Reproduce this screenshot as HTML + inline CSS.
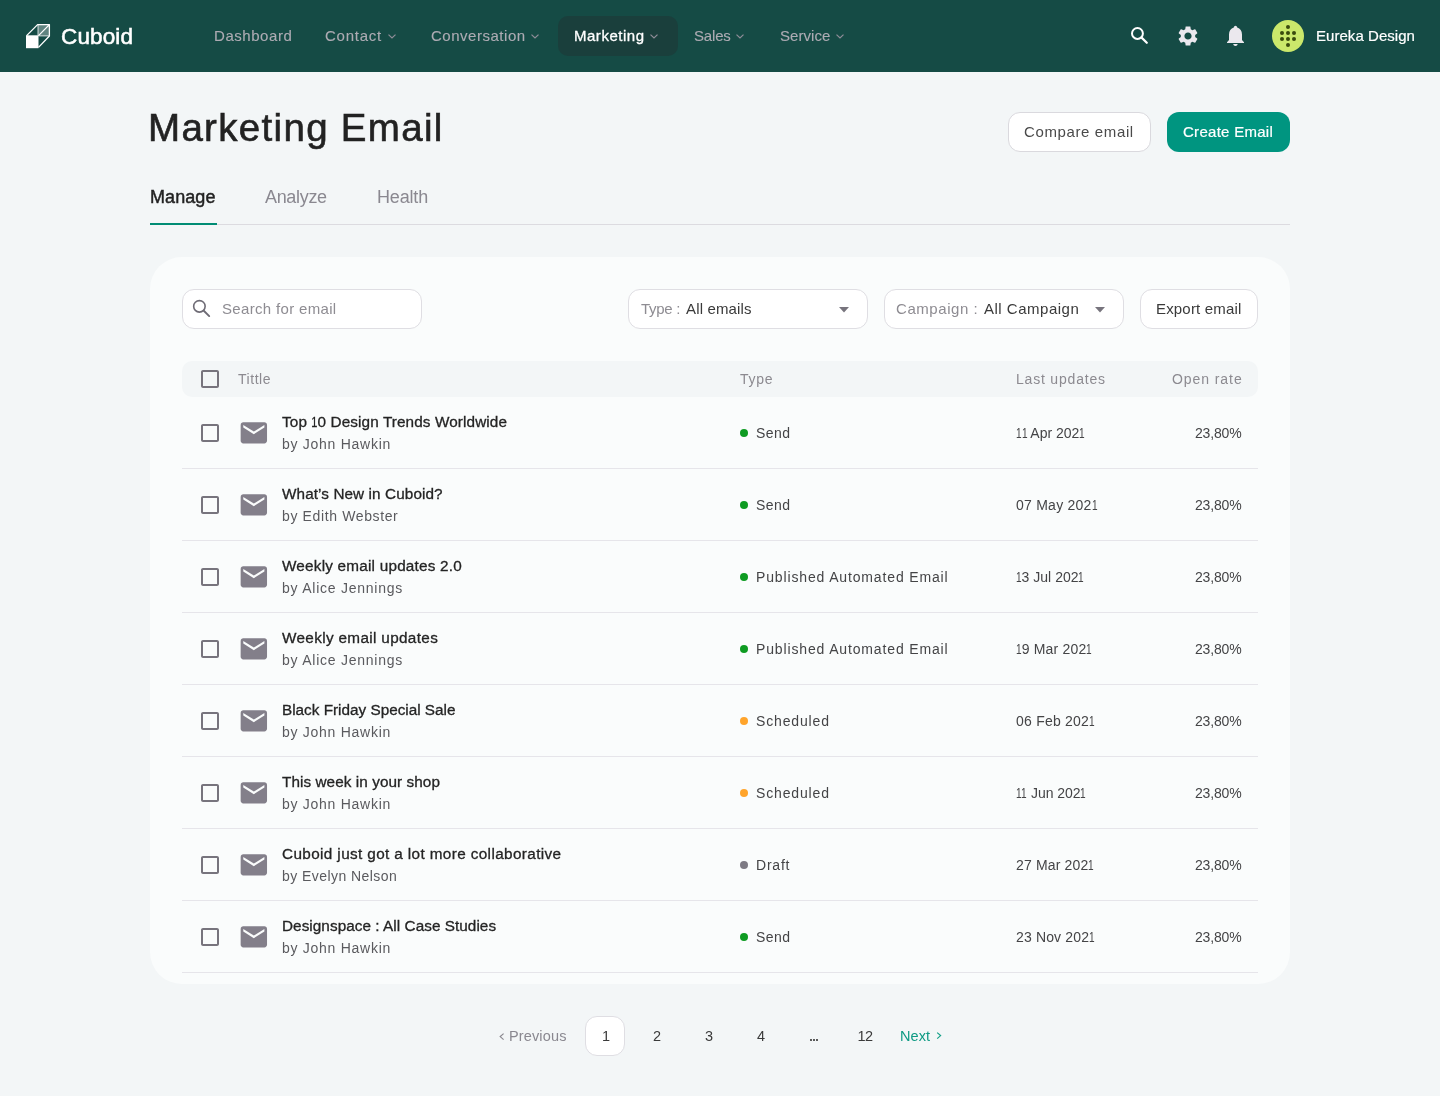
<!DOCTYPE html>
<html><head><meta charset="utf-8">
<style>
*{margin:0;padding:0;box-sizing:border-box}
html,body{width:1440px;height:1096px;overflow:hidden;background:#F3F6F7;font-family:"Liberation Sans",sans-serif}
.a{position:absolute}
.t{position:absolute;white-space:pre;font-family:"Liberation Sans",sans-serif;will-change:transform}
svg{position:absolute;overflow:visible}
.box{position:absolute;background:#fff;border:1px solid #DFDEE3;border-radius:10px}
.sep{position:absolute;left:182px;width:1076px;height:1px;background:#E6E5EA}
</style></head><body>
<!-- NAV -->
<div class="a" style="left:0;top:0;width:1440px;height:72px;background:#154B45"></div>
<svg style="left:26px;top:24px" width="24" height="24" viewBox="0 0 24 24">
  <rect x="12" y="0" width="12" height="12" fill="#fff" fill-opacity="0.32"/>
  <path d="M12 0.6V11.6M12.5 11.9H23.4" stroke="#fff" stroke-opacity="0.6" stroke-width="1.3" fill="none"/>
  <path d="M0.6 11.6L11.6 0.6H23.4V12L12.5 23.4M12.5 11.6L23.4 0.6" stroke="#fff" stroke-width="1.3" fill="none" stroke-linejoin="round"/>
  <rect x="0" y="11.3" width="12.5" height="12.9" fill="#fff"/>
</svg>
<div class="a" style="left:558px;top:16px;width:120px;height:40px;border-radius:10px;background:#1A3F3C"></div>
<svg style="left:387.5px;top:33.8px" width="8" height="5" viewBox="0 0 8 5"><path d="M0.5 0.6L4 4L7.5 0.6" stroke="#8F8D98" stroke-width="1.2" fill="none"/></svg>
<svg style="left:530.5px;top:33.8px" width="8" height="5" viewBox="0 0 8 5"><path d="M0.5 0.6L4 4L7.5 0.6" stroke="#8F8D98" stroke-width="1.2" fill="none"/></svg>
<svg style="left:650.1px;top:33.8px" width="8" height="5" viewBox="0 0 8 5"><path d="M0.5 0.6L4 4L7.5 0.6" stroke="#8F8D98" stroke-width="1.2" fill="none"/></svg>
<svg style="left:736px;top:33.8px" width="8" height="5" viewBox="0 0 8 5"><path d="M0.5 0.6L4 4L7.5 0.6" stroke="#8F8D98" stroke-width="1.2" fill="none"/></svg>
<svg style="left:836px;top:33.8px" width="8" height="5" viewBox="0 0 8 5"><path d="M0.5 0.6L4 4L7.5 0.6" stroke="#8F8D98" stroke-width="1.2" fill="none"/></svg>
<!-- nav icons -->
<svg style="left:1126px;top:22px" width="28" height="28" viewBox="0 0 28 28">
  <circle cx="11.45" cy="11.45" r="5.45" stroke="#fff" stroke-width="2" fill="none"/>
  <path d="M15.6 15.6L20.8 20.8" stroke="#fff" stroke-width="2.2" stroke-linecap="round"/>
</svg>
<svg style="left:1176px;top:24px" width="24" height="24" viewBox="0 0 24 24"><path fill="#EBE8EE" d="M19.14 12.94c.04-.3.06-.61.06-.94 0-.32-.02-.64-.07-.94l2.03-1.58c.18-.14.23-.41.12-.61l-1.920-3.32c-.12-.22-.37-.29-.59-.22l-2.39.96c-.5-.38-1.030-.7-1.620-.94l-.36-2.54c-.04-.24-.24-.41-.48-.41h-3.84c-.24 0-.43.17-.47.41l-.36 2.54c-.59.24-1.13.57-1.62.94l-2.39-.96c-.22-.08-.47 0-.59.22L2.74 8.87c-.12.21-.08.47.12.61l2.03 1.58c-.05.3-.09.63-.09.94s.02.64.07.94l-2.03 1.58c-.18.14-.23.41-.12.61l1.92 3.32c.12.22.37.29.59.22l2.39-.96c.5.38 1.03.7 1.62.94l.36 2.54c.05.24.24.41.48.41h3.84c.24 0 .44-.17.47-.41l.36-2.54c.59-.24 1.13-.56 1.62-.94l2.39.96c.22.08.47 0 .59-.22l1.92-3.32c.12-.22.07-.47-.12-.61l-2.01-1.58zM12 15.6c-1.98 0-3.6-1.62-3.6-3.6s1.62-3.6 3.6-3.6 3.6 1.62 3.6 3.6-1.62 3.6-3.6 3.6z"/></svg>
<svg style="left:1222px;top:22px" width="28" height="28" viewBox="0 0 28 28">
  <path fill="#EBE8EE" d="M13.5 3.8C14.4 3.8 15 4.6 15.2 5.6C18.2 6.5 20 9 20 12.5L20 18L22 20.3L22 21.1L5 21.1L5 20.3L7 18L7 12.5C7 9 8.8 6.5 11.8 5.6C12 4.6 12.6 3.8 13.5 3.8Z"/>
  <path fill="#EBE8EE" d="M11.2 22.1L15.7 22.1C15.5 23.3 14.6 24 13.45 24C12.3 24 11.4 23.3 11.2 22.1Z"/>
</svg>
<svg style="left:1272px;top:20px" width="32" height="32" viewBox="0 0 32 32">
  <circle cx="16" cy="16" r="16" fill="#CBE86B"/>
  <g fill="#3A4A0E"><circle cx="16" cy="7" r="2"/><circle cx="10" cy="13" r="2"/><circle cx="16" cy="13" r="2"/><circle cx="22" cy="13" r="2"/><circle cx="10" cy="19" r="2"/><circle cx="16" cy="19" r="2"/><circle cx="22" cy="19" r="2"/><circle cx="16" cy="25" r="2"/></g>
</svg>

<!-- HEADER -->
<div class="box" style="left:1008px;top:112px;width:143px;height:40px;border-color:#DAD9DE;border-radius:12px"></div>
<div class="a" style="left:1167px;top:112px;width:123px;height:40px;border-radius:12px;background:#009580"></div>
<div class="a" style="left:150px;top:224px;width:1140px;height:1px;background:#DCDBE0"></div>
<div class="a" style="left:150px;top:223px;width:67px;height:2px;background:#008C74"></div>

<!-- CARD -->
<div class="a" style="left:150px;top:257px;width:1140px;height:727px;border-radius:32px;background:#FAFCFC"></div>
<div class="box" style="left:182px;top:289px;width:240px;height:40px;border-radius:12px"></div>
<svg style="left:178px;top:286px" width="40" height="40" viewBox="0 0 40 40">
  <circle cx="21.4" cy="20.35" r="5.75" stroke="#6E6B75" stroke-width="1.6" fill="none"/>
  <path d="M25.8 24.8L31.2 30.1" stroke="#6E6B75" stroke-width="1.9" stroke-linecap="round"/>
</svg>
<div class="box" style="left:628px;top:289px;width:240px;height:40px;border-radius:12px"></div>
<svg style="left:838.8px;top:306.7px" width="10" height="6" viewBox="0 0 10 6"><path d="M0 0H10L5 5.5Z" fill="#77747D"/></svg>
<div class="box" style="left:884px;top:289px;width:240px;height:40px;border-radius:12px"></div>
<svg style="left:1095px;top:306.7px" width="10" height="6" viewBox="0 0 10 6"><path d="M0 0H10L5 5.5Z" fill="#77747D"/></svg>
<div class="box" style="left:1140px;top:289px;width:118px;height:40px;border-radius:12px"></div>

<!-- TABLE HEADER -->
<div class="a" style="left:182px;top:361px;width:1076px;height:36px;border-radius:10px;background:#F3F6F7"></div>
<svg style="left:198px;top:367px" width="24" height="24" viewBox="0 0 24 24"><path fill="#77747D" d="M19 5v14H5V5h14m0-2H5c-1.1 0-2 .9-2 2v14c0 1.1.9 2 2 2h14c1.1 0 2-.9 2-2V5c0-1.1-.9-2-2-2z"/></svg>
<svg style="left:198px;top:421px" width="24" height="24" viewBox="0 0 24 24"><path fill="#77747D" d="M19 5v14H5V5h14m0-2H5c-1.1 0-2 .9-2 2v14c0 1.1.9 2 2 2h14c1.1 0 2-.9 2-2V5c0-1.1-.9-2-2-2z"/></svg>
<svg style="left:238.16px;top:416.90px" width="31.68" height="31.68" viewBox="0 0 24 24"><path fill="#837F8A" d="M20 4H4c-1.1 0-1.99.9-1.99 2L2 18c0 1.1.9 2 2 2h16c1.1 0 2-.9 2-2V6c0-1.1-.9-2-2-2zm0 4l-8 5-8-5V6l8 5 8-5v2z"/></svg>
<div class="a" style="left:740px;top:429px;width:8px;height:8px;border-radius:50%;background:#0E9B22"></div>
<div class="sep" style="top:468px"></div>
<svg style="left:198px;top:493px" width="24" height="24" viewBox="0 0 24 24"><path fill="#77747D" d="M19 5v14H5V5h14m0-2H5c-1.1 0-2 .9-2 2v14c0 1.1.9 2 2 2h14c1.1 0 2-.9 2-2V5c0-1.1-.9-2-2-2z"/></svg>
<svg style="left:238.16px;top:488.90px" width="31.68" height="31.68" viewBox="0 0 24 24"><path fill="#837F8A" d="M20 4H4c-1.1 0-1.99.9-1.99 2L2 18c0 1.1.9 2 2 2h16c1.1 0 2-.9 2-2V6c0-1.1-.9-2-2-2zm0 4l-8 5-8-5V6l8 5 8-5v2z"/></svg>
<div class="a" style="left:740px;top:501px;width:8px;height:8px;border-radius:50%;background:#0E9B22"></div>
<div class="sep" style="top:540px"></div>
<svg style="left:198px;top:565px" width="24" height="24" viewBox="0 0 24 24"><path fill="#77747D" d="M19 5v14H5V5h14m0-2H5c-1.1 0-2 .9-2 2v14c0 1.1.9 2 2 2h14c1.1 0 2-.9 2-2V5c0-1.1-.9-2-2-2z"/></svg>
<svg style="left:238.16px;top:560.90px" width="31.68" height="31.68" viewBox="0 0 24 24"><path fill="#837F8A" d="M20 4H4c-1.1 0-1.99.9-1.99 2L2 18c0 1.1.9 2 2 2h16c1.1 0 2-.9 2-2V6c0-1.1-.9-2-2-2zm0 4l-8 5-8-5V6l8 5 8-5v2z"/></svg>
<div class="a" style="left:740px;top:573px;width:8px;height:8px;border-radius:50%;background:#0E9B22"></div>
<div class="sep" style="top:612px"></div>
<svg style="left:198px;top:637px" width="24" height="24" viewBox="0 0 24 24"><path fill="#77747D" d="M19 5v14H5V5h14m0-2H5c-1.1 0-2 .9-2 2v14c0 1.1.9 2 2 2h14c1.1 0 2-.9 2-2V5c0-1.1-.9-2-2-2z"/></svg>
<svg style="left:238.16px;top:632.90px" width="31.68" height="31.68" viewBox="0 0 24 24"><path fill="#837F8A" d="M20 4H4c-1.1 0-1.99.9-1.99 2L2 18c0 1.1.9 2 2 2h16c1.1 0 2-.9 2-2V6c0-1.1-.9-2-2-2zm0 4l-8 5-8-5V6l8 5 8-5v2z"/></svg>
<div class="a" style="left:740px;top:645px;width:8px;height:8px;border-radius:50%;background:#0E9B22"></div>
<div class="sep" style="top:684px"></div>
<svg style="left:198px;top:709px" width="24" height="24" viewBox="0 0 24 24"><path fill="#77747D" d="M19 5v14H5V5h14m0-2H5c-1.1 0-2 .9-2 2v14c0 1.1.9 2 2 2h14c1.1 0 2-.9 2-2V5c0-1.1-.9-2-2-2z"/></svg>
<svg style="left:238.16px;top:704.90px" width="31.68" height="31.68" viewBox="0 0 24 24"><path fill="#837F8A" d="M20 4H4c-1.1 0-1.99.9-1.99 2L2 18c0 1.1.9 2 2 2h16c1.1 0 2-.9 2-2V6c0-1.1-.9-2-2-2zm0 4l-8 5-8-5V6l8 5 8-5v2z"/></svg>
<div class="a" style="left:740px;top:717px;width:8px;height:8px;border-radius:50%;background:#FFA42B"></div>
<div class="sep" style="top:756px"></div>
<svg style="left:198px;top:781px" width="24" height="24" viewBox="0 0 24 24"><path fill="#77747D" d="M19 5v14H5V5h14m0-2H5c-1.1 0-2 .9-2 2v14c0 1.1.9 2 2 2h14c1.1 0 2-.9 2-2V5c0-1.1-.9-2-2-2z"/></svg>
<svg style="left:238.16px;top:776.90px" width="31.68" height="31.68" viewBox="0 0 24 24"><path fill="#837F8A" d="M20 4H4c-1.1 0-1.99.9-1.99 2L2 18c0 1.1.9 2 2 2h16c1.1 0 2-.9 2-2V6c0-1.1-.9-2-2-2zm0 4l-8 5-8-5V6l8 5 8-5v2z"/></svg>
<div class="a" style="left:740px;top:789px;width:8px;height:8px;border-radius:50%;background:#FFA42B"></div>
<div class="sep" style="top:828px"></div>
<svg style="left:198px;top:853px" width="24" height="24" viewBox="0 0 24 24"><path fill="#77747D" d="M19 5v14H5V5h14m0-2H5c-1.1 0-2 .9-2 2v14c0 1.1.9 2 2 2h14c1.1 0 2-.9 2-2V5c0-1.1-.9-2-2-2z"/></svg>
<svg style="left:238.16px;top:848.90px" width="31.68" height="31.68" viewBox="0 0 24 24"><path fill="#837F8A" d="M20 4H4c-1.1 0-1.99.9-1.99 2L2 18c0 1.1.9 2 2 2h16c1.1 0 2-.9 2-2V6c0-1.1-.9-2-2-2zm0 4l-8 5-8-5V6l8 5 8-5v2z"/></svg>
<div class="a" style="left:740px;top:861px;width:8px;height:8px;border-radius:50%;background:#7D7A84"></div>
<div class="sep" style="top:900px"></div>
<svg style="left:198px;top:925px" width="24" height="24" viewBox="0 0 24 24"><path fill="#77747D" d="M19 5v14H5V5h14m0-2H5c-1.1 0-2 .9-2 2v14c0 1.1.9 2 2 2h14c1.1 0 2-.9 2-2V5c0-1.1-.9-2-2-2z"/></svg>
<svg style="left:238.16px;top:920.90px" width="31.68" height="31.68" viewBox="0 0 24 24"><path fill="#837F8A" d="M20 4H4c-1.1 0-1.99.9-1.99 2L2 18c0 1.1.9 2 2 2h16c1.1 0 2-.9 2-2V6c0-1.1-.9-2-2-2zm0 4l-8 5-8-5V6l8 5 8-5v2z"/></svg>
<div class="a" style="left:740px;top:933px;width:8px;height:8px;border-radius:50%;background:#0E9B22"></div>
<div class="sep" style="top:972px"></div>

<!-- PAGINATION -->
<div class="box" style="left:585px;top:1016px;width:40px;height:40px;border-radius:12px"></div>
<svg style="left:498.6px;top:1032.6px" width="6" height="8" viewBox="0 0 6 8"><path d="M4.6 0.6L1.2 3.6L4.6 6.6" stroke="#8A8890" stroke-width="1.2" fill="none"/></svg>
<svg style="left:935.6px;top:1032px" width="6" height="8" viewBox="0 0 6 8"><path d="M1.2 0.6L4.6 3.6L1.2 6.6" stroke="#14A088" stroke-width="1.2" fill="none"/></svg>

<div class="a" style="left:810px;top:1039px;width:2px;height:2px;background:#5A5A5A"></div><div class="a" style="left:813px;top:1039px;width:2px;height:2px;background:#5A5A5A"></div><div class="a" style="left:816px;top:1039px;width:2px;height:2px;background:#5A5A5A"></div>
<div class=t style="left:61.30px;top:26.17px;font-size:22.5px;line-height:22.5px;color:#FFFFFF;letter-spacing:0.138px;font-weight:400;-webkit-text-stroke:0.55px #FFFFFF;">Cuboid</div>
<div class=t style="left:213.90px;top:28.35px;font-size:15px;line-height:15px;color:#ADABB3;letter-spacing:0.551px;font-weight:400;-webkit-text-stroke:0.12px #ADABB3;">Dashboard</div>
<div class=t style="left:325.00px;top:28.35px;font-size:15px;line-height:15px;color:#ADABB3;letter-spacing:0.766px;font-weight:400;-webkit-text-stroke:0.12px #ADABB3;">Contact</div>
<div class=t style="left:430.50px;top:28.35px;font-size:15px;line-height:15px;color:#ADABB3;letter-spacing:0.519px;font-weight:400;-webkit-text-stroke:0.12px #ADABB3;">Conversation</div>
<div class=t style="left:573.60px;top:28.35px;font-size:15px;line-height:15px;color:#FFFFFF;letter-spacing:0.518px;font-weight:400;-webkit-text-stroke:0.3px #FFFFFF;">Marketing</div>
<div class=t style="left:693.70px;top:28.35px;font-size:15px;line-height:15px;color:#ADABB3;letter-spacing:-0.170px;font-weight:400;-webkit-text-stroke:0.12px #ADABB3;">Sales</div>
<div class=t style="left:779.90px;top:28.35px;font-size:15px;line-height:15px;color:#ADABB3;letter-spacing:0.061px;font-weight:400;-webkit-text-stroke:0.12px #ADABB3;">Service</div>
<div class=t style="left:1315.55px;top:28.15px;font-size:15px;line-height:15px;color:#FFFFFF;letter-spacing:0.047px;font-weight:400;-webkit-text-stroke:0.2px #FFFFFF;">Eureka Design</div>
<div class=t style="left:147.50px;top:108.78px;font-size:38.5px;line-height:38.5px;color:#222222;letter-spacing:1.313px;font-weight:400;-webkit-text-stroke:0.6px #222222;">Marketing Email</div>
<div class=t style="left:1023.70px;top:124.25px;font-size:15px;line-height:15px;color:#4A4A4A;letter-spacing:0.623px;font-weight:400;">Compare email</div>
<div class=t style="left:1182.60px;top:124.25px;font-size:15px;line-height:15px;color:#FFFFFF;letter-spacing:0.282px;font-weight:400;-webkit-text-stroke:0.2px #FFFFFF;">Create Email</div>
<div class=t style="left:149.90px;top:187.60px;font-size:18px;line-height:18px;color:#222222;letter-spacing:0.068px;font-weight:400;-webkit-text-stroke:0.45px #222222;">Manage</div>
<div class=t style="left:264.90px;top:187.60px;font-size:18px;line-height:18px;color:#8A8890;letter-spacing:-0.324px;font-weight:400;">Analyze</div>
<div class=t style="left:376.60px;top:187.60px;font-size:18px;line-height:18px;color:#8A8890;letter-spacing:-0.166px;font-weight:400;">Health</div>
<div class=t style="left:221.60px;top:300.95px;font-size:15px;line-height:15px;color:#8E8C92;letter-spacing:0.332px;font-weight:400;">Search for email</div>
<div class=t style="left:641.00px;top:300.95px;font-size:15px;line-height:15px;color:#8E8C92;letter-spacing:-0.312px;font-weight:400;">Type :</div>
<div class=t style="left:686.10px;top:300.95px;font-size:15px;line-height:15px;color:#3A3A3A;letter-spacing:0.157px;font-weight:400;">All emails</div>
<div class=t style="left:896.40px;top:300.95px;font-size:15px;line-height:15px;color:#8E8C92;letter-spacing:0.565px;font-weight:400;">Campaign :</div>
<div class=t style="left:983.60px;top:300.95px;font-size:15px;line-height:15px;color:#3A3A3A;letter-spacing:0.507px;font-weight:400;">All Campaign</div>
<div class=t style="left:1155.60px;top:300.95px;font-size:15px;line-height:15px;color:#3A3A3A;letter-spacing:0.175px;font-weight:400;">Export email</div>
<div class=t style="left:237.60px;top:372.00px;font-size:14px;line-height:14px;color:#8C8A90;letter-spacing:0.534px;font-weight:400;">Tittle</div>
<div class=t style="left:739.70px;top:372.00px;font-size:14px;line-height:14px;color:#8C8A90;letter-spacing:0.714px;font-weight:400;">Type</div>
<div class=t style="left:1015.90px;top:372.00px;font-size:14px;line-height:14px;color:#8C8A90;letter-spacing:0.803px;font-weight:400;">Last updates</div>
<div class=t style="right:197.47px;top:372.00px;font-size:14px;line-height:14px;color:#8C8A90;letter-spacing:0.929px;font-weight:400;">Open rate</div>
<div class=t style="left:282.00px;top:413.89px;font-size:15.3px;line-height:15.3px;color:#242424;letter-spacing:0.110px;font-weight:400;-webkit-text-stroke:0.3px #242424;">Top <span style='display:inline-block;width:6.12px;margin-right:0.110px;letter-spacing:0'><span style='display:inline-block;transform:scaleX(0.72);margin-left:-1.19px'>1</span></span>0 Design Trends Worldwide</div>
<div class=t style="left:282.00px;top:437.10px;font-size:14px;line-height:14px;color:#5A5A5E;letter-spacing:0.729px;font-weight:400;">by John Hawkin</div>
<div class=t style="left:755.90px;top:425.90px;font-size:14px;line-height:14px;color:#444446;letter-spacing:0.432px;font-weight:400;">Send</div>
<div class=t style="left:1015.70px;top:425.90px;font-size:14px;line-height:14px;color:#444446;letter-spacing:0.003px;font-weight:400;"><span style='display:inline-block;width:5.60px;margin-right:0.003px;letter-spacing:0'><span style='display:inline-block;transform:scaleX(0.72);margin-left:-1.09px'>1</span></span><span style='display:inline-block;width:5.60px;margin-right:0.003px;letter-spacing:0'><span style='display:inline-block;transform:scaleX(0.72);margin-left:-1.09px'>1</span></span> Apr 202<span style='display:inline-block;width:5.60px;margin-right:0.000px;letter-spacing:0'><span style='display:inline-block;transform:scaleX(0.72);margin-left:-1.09px'>1</span></span></div>
<div class=t style="right:198.58px;top:425.90px;font-size:14px;line-height:14px;color:#444446;letter-spacing:-0.177px;font-weight:400;">23,80%</div>
<div class=t style="left:282.00px;top:485.89px;font-size:15.3px;line-height:15.3px;color:#242424;letter-spacing:0.094px;font-weight:400;-webkit-text-stroke:0.3px #242424;">What’s New in Cuboid?</div>
<div class=t style="left:282.00px;top:509.10px;font-size:14px;line-height:14px;color:#5A5A5E;letter-spacing:0.629px;font-weight:400;">by Edith Webster</div>
<div class=t style="left:755.90px;top:497.90px;font-size:14px;line-height:14px;color:#444446;letter-spacing:0.432px;font-weight:400;">Send</div>
<div class=t style="left:1015.70px;top:497.90px;font-size:14px;line-height:14px;color:#444446;letter-spacing:0.250px;font-weight:400;">07 May 202<span style='display:inline-block;width:5.60px;margin-right:0.000px;letter-spacing:0'><span style='display:inline-block;transform:scaleX(0.72);margin-left:-1.09px'>1</span></span></div>
<div class=t style="right:198.58px;top:497.90px;font-size:14px;line-height:14px;color:#444446;letter-spacing:-0.177px;font-weight:400;">23,80%</div>
<div class=t style="left:282.00px;top:557.89px;font-size:15.3px;line-height:15.3px;color:#242424;letter-spacing:0.213px;font-weight:400;-webkit-text-stroke:0.3px #242424;">Weekly email updates 2.0</div>
<div class=t style="left:282.00px;top:581.10px;font-size:14px;line-height:14px;color:#5A5A5E;letter-spacing:0.757px;font-weight:400;">by Alice Jennings</div>
<div class=t style="left:755.90px;top:569.90px;font-size:14px;line-height:14px;color:#444446;letter-spacing:0.853px;font-weight:400;">Published Automated Email</div>
<div class=t style="left:1015.70px;top:569.90px;font-size:14px;line-height:14px;color:#444446;letter-spacing:0.015px;font-weight:400;"><span style='display:inline-block;width:5.60px;margin-right:0.015px;letter-spacing:0'><span style='display:inline-block;transform:scaleX(0.72);margin-left:-1.09px'>1</span></span>3 Jul 202<span style='display:inline-block;width:5.60px;margin-right:0.000px;letter-spacing:0'><span style='display:inline-block;transform:scaleX(0.72);margin-left:-1.09px'>1</span></span></div>
<div class=t style="right:198.58px;top:569.90px;font-size:14px;line-height:14px;color:#444446;letter-spacing:-0.177px;font-weight:400;">23,80%</div>
<div class=t style="left:282.00px;top:629.89px;font-size:15.3px;line-height:15.3px;color:#242424;letter-spacing:0.338px;font-weight:400;-webkit-text-stroke:0.3px #242424;">Weekly email updates</div>
<div class=t style="left:282.00px;top:653.10px;font-size:14px;line-height:14px;color:#5A5A5E;letter-spacing:0.757px;font-weight:400;">by Alice Jennings</div>
<div class=t style="left:755.90px;top:641.90px;font-size:14px;line-height:14px;color:#444446;letter-spacing:0.853px;font-weight:400;">Published Automated Email</div>
<div class=t style="left:1015.70px;top:641.90px;font-size:14px;line-height:14px;color:#444446;letter-spacing:0.173px;font-weight:400;"><span style='display:inline-block;width:5.60px;margin-right:0.173px;letter-spacing:0'><span style='display:inline-block;transform:scaleX(0.72);margin-left:-1.09px'>1</span></span>9 Mar 202<span style='display:inline-block;width:5.60px;margin-right:0.000px;letter-spacing:0'><span style='display:inline-block;transform:scaleX(0.72);margin-left:-1.09px'>1</span></span></div>
<div class=t style="right:198.58px;top:641.90px;font-size:14px;line-height:14px;color:#444446;letter-spacing:-0.177px;font-weight:400;">23,80%</div>
<div class=t style="left:282.00px;top:701.89px;font-size:15.3px;line-height:15.3px;color:#242424;letter-spacing:0.002px;font-weight:400;-webkit-text-stroke:0.3px #242424;">Black Friday Special Sale</div>
<div class=t style="left:282.00px;top:725.10px;font-size:14px;line-height:14px;color:#5A5A5E;letter-spacing:0.729px;font-weight:400;">by John Hawkin</div>
<div class=t style="left:755.90px;top:713.90px;font-size:14px;line-height:14px;color:#444446;letter-spacing:0.854px;font-weight:400;">Scheduled</div>
<div class=t style="left:1015.70px;top:713.90px;font-size:14px;line-height:14px;color:#444446;letter-spacing:0.223px;font-weight:400;">06 Feb 202<span style='display:inline-block;width:5.60px;margin-right:0.000px;letter-spacing:0'><span style='display:inline-block;transform:scaleX(0.72);margin-left:-1.09px'>1</span></span></div>
<div class=t style="right:198.58px;top:713.90px;font-size:14px;line-height:14px;color:#444446;letter-spacing:-0.177px;font-weight:400;">23,80%</div>
<div class=t style="left:282.00px;top:773.89px;font-size:15.3px;line-height:15.3px;color:#242424;letter-spacing:0.069px;font-weight:400;-webkit-text-stroke:0.3px #242424;">This week in your shop</div>
<div class=t style="left:282.00px;top:797.10px;font-size:14px;line-height:14px;color:#5A5A5E;letter-spacing:0.729px;font-weight:400;">by John Hawkin</div>
<div class=t style="left:755.90px;top:785.90px;font-size:14px;line-height:14px;color:#444446;letter-spacing:0.854px;font-weight:400;">Scheduled</div>
<div class=t style="left:1015.70px;top:785.90px;font-size:14px;line-height:14px;color:#444446;letter-spacing:-0.043px;font-weight:400;"><span style='display:inline-block;width:5.60px;margin-right:-0.043px;letter-spacing:0'><span style='display:inline-block;transform:scaleX(0.72);margin-left:-1.09px'>1</span></span><span style='display:inline-block;width:5.60px;margin-right:-0.043px;letter-spacing:0'><span style='display:inline-block;transform:scaleX(0.72);margin-left:-1.09px'>1</span></span> Jun 202<span style='display:inline-block;width:5.60px;margin-right:0.000px;letter-spacing:0'><span style='display:inline-block;transform:scaleX(0.72);margin-left:-1.09px'>1</span></span></div>
<div class=t style="right:198.58px;top:785.90px;font-size:14px;line-height:14px;color:#444446;letter-spacing:-0.177px;font-weight:400;">23,80%</div>
<div class=t style="left:282.00px;top:845.89px;font-size:15.3px;line-height:15.3px;color:#242424;letter-spacing:0.376px;font-weight:400;-webkit-text-stroke:0.3px #242424;">Cuboid just got a lot more collaborative</div>
<div class=t style="left:282.00px;top:869.10px;font-size:14px;line-height:14px;color:#5A5A5E;letter-spacing:0.442px;font-weight:400;">by Evelyn Nelson</div>
<div class=t style="left:755.90px;top:857.90px;font-size:14px;line-height:14px;color:#444446;letter-spacing:0.789px;font-weight:400;">Draft</div>
<div class=t style="left:1015.70px;top:857.90px;font-size:14px;line-height:14px;color:#444446;letter-spacing:0.164px;font-weight:400;">27 Mar 202<span style='display:inline-block;width:5.60px;margin-right:0.000px;letter-spacing:0'><span style='display:inline-block;transform:scaleX(0.72);margin-left:-1.09px'>1</span></span></div>
<div class=t style="right:198.58px;top:857.90px;font-size:14px;line-height:14px;color:#444446;letter-spacing:-0.177px;font-weight:400;">23,80%</div>
<div class=t style="left:282.00px;top:917.89px;font-size:15.3px;line-height:15.3px;color:#242424;letter-spacing:0.052px;font-weight:400;-webkit-text-stroke:0.3px #242424;">Designspace : All Case Studies</div>
<div class=t style="left:282.00px;top:941.10px;font-size:14px;line-height:14px;color:#5A5A5E;letter-spacing:0.729px;font-weight:400;">by John Hawkin</div>
<div class=t style="left:755.90px;top:929.90px;font-size:14px;line-height:14px;color:#444446;letter-spacing:0.432px;font-weight:400;">Send</div>
<div class=t style="left:1015.70px;top:929.90px;font-size:14px;line-height:14px;color:#444446;letter-spacing:0.146px;font-weight:400;">23 Nov 202<span style='display:inline-block;width:5.60px;margin-right:0.000px;letter-spacing:0'><span style='display:inline-block;transform:scaleX(0.72);margin-left:-1.09px'>1</span></span></div>
<div class=t style="right:198.58px;top:929.90px;font-size:14px;line-height:14px;color:#444446;letter-spacing:-0.177px;font-weight:400;">23,80%</div>
<div class=t style="left:508.60px;top:1028.58px;font-size:14.5px;line-height:14.5px;color:#8A8890;letter-spacing:0.140px;font-weight:400;">Previous</div>
<div class=t style="left:405.50px;width:400px;text-align:center;top:1028.58px;font-size:14.5px;line-height:14.5px;color:#3A3A3A;letter-spacing:0.000px;font-weight:400;">1</div>
<div class=t style="left:457.30px;width:400px;text-align:center;top:1028.58px;font-size:14.5px;line-height:14.5px;color:#3A3A3A;letter-spacing:0.000px;font-weight:400;">2</div>
<div class=t style="left:509.00px;width:400px;text-align:center;top:1028.58px;font-size:14.5px;line-height:14.5px;color:#3A3A3A;letter-spacing:0.000px;font-weight:400;">3</div>
<div class=t style="left:561.00px;width:400px;text-align:center;top:1028.58px;font-size:14.5px;line-height:14.5px;color:#3A3A3A;letter-spacing:0.000px;font-weight:400;">4</div>
<div class=t style="left:665.40px;width:400px;text-align:center;top:1028.58px;font-size:14.5px;line-height:14.5px;color:#3A3A3A;letter-spacing:-0.600px;font-weight:400;">12</div>
<div class=t style="left:900.00px;top:1028.58px;font-size:14.5px;line-height:14.5px;color:#0E9A83;letter-spacing:0.057px;font-weight:400;">Next</div>
</body></html>
